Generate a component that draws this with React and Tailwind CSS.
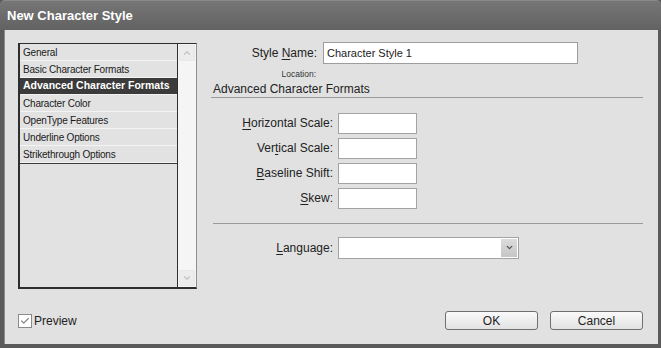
import { Check, ChevronDown, ChevronUp } from "lucide-react";

const items = [
  "General",
  "Basic Character Formats",
  "Advanced Character Formats",
  "Character Color",
  "OpenType Features",
  "Underline Options",
  "Strikethrough Options",
];

const font = { fontFamily: '"Liberation Sans", Arial, sans-serif' };

function Field({ u, rest, pre = "" }) {
  return (
    <div className="flex h-[21px] items-center">
      <span className="w-[127px] pr-[5px] text-right text-[12px] text-[#222]">
        {pre}
        <span className="underline underline-offset-2">{u}</span>
        {rest}
      </span>
      <div className="h-[21px] w-[79px] border border-[#a3a3a3] bg-white" />
    </div>
  );
}

export default function App() {
  return (
    <div
      className="flex h-[348px] w-[661px] flex-col overflow-hidden bg-[#5a5a5a]"
      style={font}
    >
      {/* title bar */}
      <div className="flex h-[30px] items-center rounded-t-[5px] border-t border-[#8a8a8a] bg-gradient-to-b from-[#767676] to-[#626262] pl-[7px]">
        <span className="text-[13px] font-bold text-white">New Character Style</span>
      </div>

      {/* body */}
      <div className="mb-[4px] ml-[4px] mr-[3px] flex flex-1 flex-col border-l border-[#8c8c8c] bg-[#e1e1e1] pl-[13px] pt-[13px]">
        <div className="flex">
          {/* category list */}
          <div className="flex h-[246px] w-[179px] border-b-2 border-l-2 border-t border-[#2e2e2e] border-r border-r-[#8f8f8f]">
            <div className="flex w-[158px] flex-col border-r border-[#2e2e2e] bg-[#e2e2e2]">
              {items.map((it, i) =>
                i === 2 ? (
                  <div
                    key={it}
                    className="flex h-[17px] items-center border-b border-[#f2f2f2] bg-[#3b3b3b] pl-[3px] text-[10.5px] font-bold text-white"
                  >
                    {it}
                  </div>
                ) : (
                  <div
                    key={it}
                    className="flex h-[17px] items-center border-b border-[#f4f4f4] pl-[3px] text-[10px] tracking-[-0.2px] text-[#1a1a1a]"
                  >
                    {it}
                  </div>
                )
              )}
              <div className="border-t border-[#3a3a3a]" />
            </div>
            <div className="flex flex-1 flex-col justify-between bg-[#f5f5f5]">
              <div className="m-[1px] flex h-[16px] items-center justify-center border border-[#e8e8e8] bg-[#ececec]">
                <ChevronUp className="h-[10px] w-[10px] text-[#c4c4c4]" strokeWidth={3} />
              </div>
              <div className="m-[1px] flex h-[16px] items-center justify-center border border-[#e8e8e8] bg-[#ececec]">
                <ChevronDown className="h-[10px] w-[10px] text-[#c4c4c4]" strokeWidth={3} />
              </div>
            </div>
          </div>

          {/* right panel */}
          <div className="ml-[14px] flex w-[432px] flex-col">
            <div className="-mt-[1px] flex h-[22px] items-center">
              <span className="w-[112px] pr-[6px] text-right text-[12px] text-[#222]">
                Style <span className="underline underline-offset-2">N</span>ame:
              </span>
              <div className="flex h-[22px] w-[255px] items-center border border-[#9d9d9d] bg-white pl-[3px] text-[11px] text-[#222]">
                Character Style 1
              </div>
            </div>
            <div className="mt-[4px] w-[105px] text-right text-[8.5px] text-[#333]">Location:</div>
            <div className="mt-[1px] pl-[2px] text-[12px] leading-[14px] text-[#222]">
              Advanced Character Formats
            </div>
            <div className="mt-[1px] border-t border-[#9a9a9a]" />

            <div className="mt-[15px] flex flex-col gap-[4px]">
              <Field u="H" rest="orizontal Scale:" />
              <Field pre="Ver" u="t" rest="ical Scale:" />
              <Field u="B" rest="aseline Shift:" />
              <Field u="S" rest="kew:" />
            </div>

            <div className="mt-[14px] ml-[2px] border-t border-[#9a9a9a]" />

            <div className="mt-[13px] flex h-[22px] items-center">
              <span className="w-[127px] pr-[5px] text-right text-[12px] text-[#222]">
                <span className="underline underline-offset-2">L</span>anguage:
              </span>
              <div className="flex h-[22px] w-[181px] items-center justify-end border border-[#a3a3a3] bg-white pr-[1px]">
                <div className="flex h-[18px] w-[16px] items-center justify-center bg-gradient-to-b from-[#dcdcdc] to-[#c6c6c6]">
                  <ChevronDown className="h-[9px] w-[9px] text-[#555]" strokeWidth={3.5} />
                </div>
              </div>
            </div>
          </div>
        </div>

        {/* footer */}
        <div className="mt-[22px] flex items-center">
          <div className="flex h-[14px] w-[14px] items-center justify-center border border-[#8a8a8a] bg-white">
            <Check className="h-[10px] w-[10px] text-[#888]" strokeWidth={3} />
          </div>
          <span className="ml-[2px] text-[12px] text-[#222]">Preview</span>
          <div className="ml-auto mr-[15px] flex gap-[12px]">
            <div className="flex h-[19px] w-[93px] items-center justify-center rounded-[3px] border border-[#6f6f6f] bg-gradient-to-b from-[#fafafa] to-[#e2e2e2] text-[12px] text-[#222]">
              OK
            </div>
            <div className="flex h-[19px] w-[93px] items-center justify-center rounded-[3px] border border-[#6f6f6f] bg-gradient-to-b from-[#fafafa] to-[#e2e2e2] text-[12px] text-[#222]">
              Cancel
            </div>
          </div>
        </div>
      </div>
    </div>
  );
}
